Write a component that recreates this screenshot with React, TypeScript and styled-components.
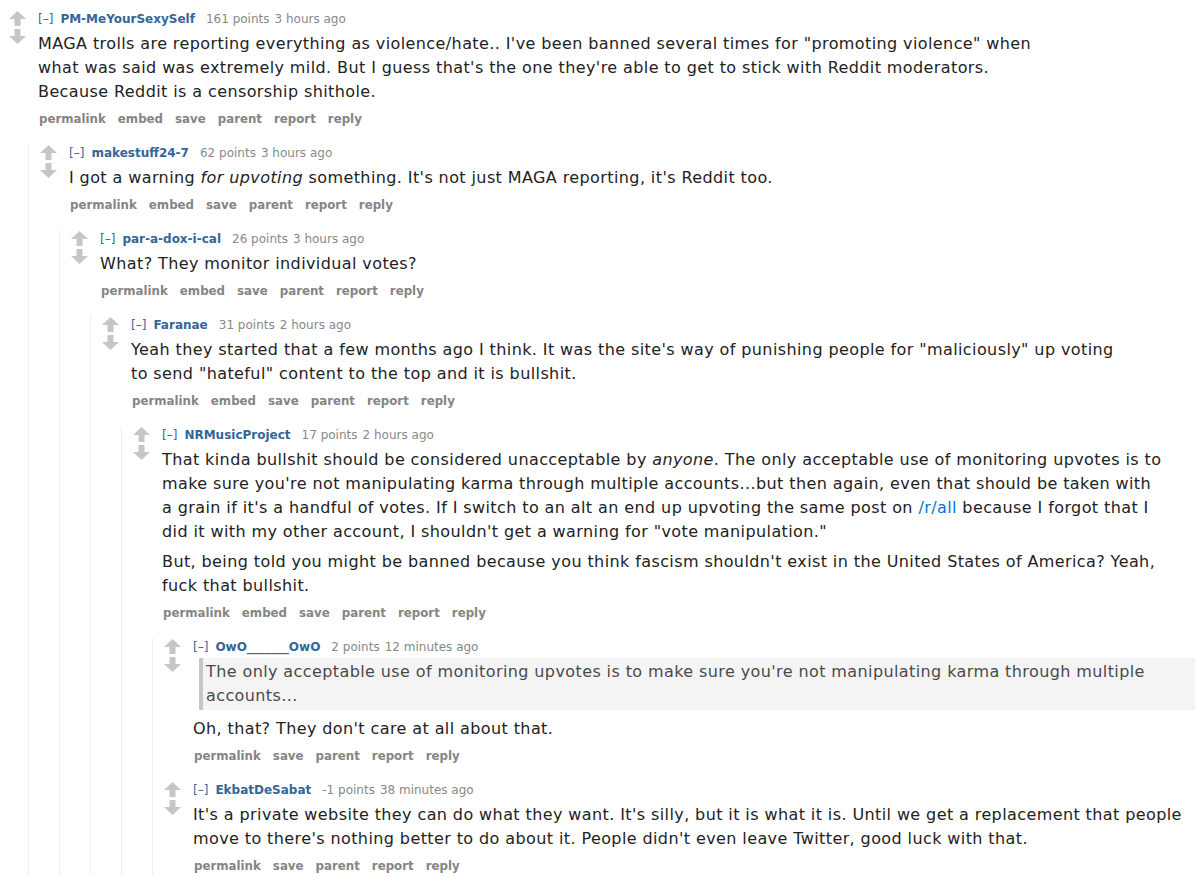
import React from "react";
import styled, { createGlobalStyle } from "styled-components";

const GlobalStyle = createGlobalStyle`
  html, body {
    margin: 0;
    padding: 0;
    background: #fff;
  }
  body {
    font-family: "DejaVu Sans", Verdana, sans-serif;
    color: #222;
  }
`;

const Page = styled.div`
  padding: 10px 0 0 9px;
  width: 1200px;
  box-sizing: border-box;
  overflow: hidden;
`;

const CommentWrap = styled.div``;

const Row = styled.div`
  display: flex;
  align-items: flex-start;
  margin-bottom: 16px;
`;

const Midcol = styled.div`
  width: 29px;
  flex: none;
  display: flex;
  flex-direction: column;
  gap: 3px;
  padding-top: 1px;
`;

const ArrowSvg = styled.svg<{ $down?: boolean }>`
  display: block;
  fill: #c6c6c6;
  transform: ${(p) => (p.$down ? "rotate(180deg)" : "none")};
`;

const Entry = styled.div`
  flex: 1;
  min-width: 0;
`;

const Tagline = styled.div`
  display: flex;
  align-items: baseline;
  gap: 5px;
  font-size: 12px;
  line-height: 18px;
  color: #888;
  white-space: nowrap;
`;

const Expand = styled.a`
  color: #369;
  text-decoration: none;
  margin-right: 2px;
`;

const Author = styled.a`
  color: #369;
  font-weight: bold;
  text-decoration: none;
  margin-right: 6px;
`;

const Score = styled.span`
  color: #888;
`;

const Md = styled.div`
  max-width: 1004px;
  margin-top: 4px;
  font-size: 16px;
  letter-spacing: 0.4px;
  line-height: 24px;
  color: #222;

  em {
    font-style: italic;
  }
`;

const Para = styled.p`
  margin: 0;

  & + & {
    margin-top: 6px;
  }
`;

const Quote = styled.blockquote`
  margin: -2px 2px 7px 6px;
  padding: 2px 8px 2px 3px;
  border-left: 4px solid #c6c6c6;
  background: #f4f4f4;
  color: #4a4a4a;
`;

const BodyLink = styled.a`
  color: #0079d3;
  text-decoration: none;
`;

const Buttons = styled.div`
  display: flex;
  gap: 12px;
  margin-top: 6px;
  font-size: 11.8px;
  line-height: 18px;
  padding-left: 1px;
`;

const ButtonLink = styled.a`
  color: #858585;
  font-weight: bold;
  text-decoration: none;
`;

const Children = styled.div`
  margin-left: 19px;
  border-left: 1px solid #efefef;
  padding-left: 11px;
`;

type Block = { kind: "p" | "quote"; parts: React.ReactNode };

type CommentData = {
  author: string;
  points: string;
  time: string;
  body: Block[];
  buttons: string[];
  children?: CommentData[];
};

const FULL = ["permalink", "embed", "save", "parent", "report", "reply"];
const SHORT = ["permalink", "save", "parent", "report", "reply"];

const thread: CommentData = {
  author: "PM-MeYourSexySelf",
  points: "161 points",
  time: "3 hours ago",
  buttons: FULL,
  body: [
    {
      kind: "p",
      parts:
        'MAGA trolls are reporting everything as violence/hate.. I\'ve been banned several times for "promoting violence" when what was said was extremely mild. But I guess that\'s the one they\'re able to get to stick with Reddit moderators. Because Reddit is a censorship shithole.',
    },
  ],
  children: [
    {
      author: "makestuff24-7",
      points: "62 points",
      time: "3 hours ago",
      buttons: FULL,
      body: [
        {
          kind: "p",
          parts: (
            <>
              I got a warning <em>for upvoting</em> something. It's not just MAGA reporting, it's Reddit too.
            </>
          ),
        },
      ],
      children: [
        {
          author: "par-a-dox-i-cal",
          points: "26 points",
          time: "3 hours ago",
          buttons: FULL,
          body: [{ kind: "p", parts: "What? They monitor individual votes?" }],
          children: [
            {
              author: "Faranae",
              points: "31 points",
              time: "2 hours ago",
              buttons: FULL,
              body: [
                {
                  kind: "p",
                  parts:
                    'Yeah they started that a few months ago I think. It was the site\'s way of punishing people for "maliciously" up voting to send "hateful" content to the top and it is bullshit.',
                },
              ],
              children: [
                {
                  author: "NRMusicProject",
                  points: "17 points",
                  time: "2 hours ago",
                  buttons: FULL,
                  body: [
                    {
                      kind: "p",
                      parts: (
                        <>
                          That kinda bullshit should be considered unacceptable by <em>anyone</em>. The only
                          acceptable use of monitoring upvotes is to make sure you're not manipulating karma
                          through multiple accounts...but then again, even that should be taken with a grain if
                          it's a handful of votes. If I switch to an alt an end up upvoting the same post on{" "}
                          <BodyLink href="#">/r/all</BodyLink> because I forgot that I did it with my other
                          account, I shouldn't get a warning for "vote manipulation."
                        </>
                      ),
                    },
                    {
                      kind: "p",
                      parts:
                        "But, being told you might be banned because you think fascism shouldn't exist in the United States of America? Yeah, fuck that bullshit.",
                    },
                  ],
                  children: [
                    {
                      author: "OwO_______OwO",
                      points: "2 points",
                      time: "12 minutes ago",
                      buttons: SHORT,
                      body: [
                        {
                          kind: "quote",
                          parts:
                            "The only acceptable use of monitoring upvotes is to make sure you're not manipulating karma through multiple accounts...",
                        },
                        { kind: "p", parts: "Oh, that? They don't care at all about that." },
                      ],
                    },
                    {
                      author: "EkbatDeSabat",
                      points: "-1 points",
                      time: "38 minutes ago",
                      buttons: SHORT,
                      body: [
                        {
                          kind: "p",
                          parts:
                            "It's a private website they can do what they want. It's silly, but it is what it is. Until we get a replacement that people move to there's nothing better to do about it. People didn't even leave Twitter, good luck with that.",
                        },
                      ],
                    },
                  ],
                },
              ],
            },
          ],
        },
      ],
    },
  ],
};

function Arrow({ down }: { down?: boolean }) {
  return (
    <ArrowSvg width="17" height="15" viewBox="0 0 17 15" $down={down}>
      <path d="M8.5 0 L17 8 L11.5 8 L11.5 15 L5.5 15 L5.5 8 L0 8 Z" />
    </ArrowSvg>
  );
}

function Comment({ data }: { data: CommentData }) {
  return (
    <CommentWrap>
      <Row>
        <Midcol>
          <Arrow />
          <Arrow down />
        </Midcol>
        <Entry>
          <Tagline>
            <Expand href="#">[–]</Expand>
            <Author href="#">{data.author}</Author>
            <Score>{data.points}</Score>
            <Score>{data.time}</Score>
          </Tagline>
          <Md>
            {data.body.map((b, i) =>
              b.kind === "quote" ? <Quote key={i}>{b.parts}</Quote> : <Para key={i}>{b.parts}</Para>
            )}
          </Md>
          <Buttons>
            {data.buttons.map((b) => (
              <ButtonLink key={b} href="#">
                {b}
              </ButtonLink>
            ))}
          </Buttons>
        </Entry>
      </Row>
      {data.children && (
        <Children>
          {data.children.map((c) => (
            <Comment key={c.author} data={c} />
          ))}
        </Children>
      )}
    </CommentWrap>
  );
}

export default function App() {
  return (
    <>
      <GlobalStyle />
      <Page>
        <Comment data={thread} />
      </Page>
    </>
  );
}
